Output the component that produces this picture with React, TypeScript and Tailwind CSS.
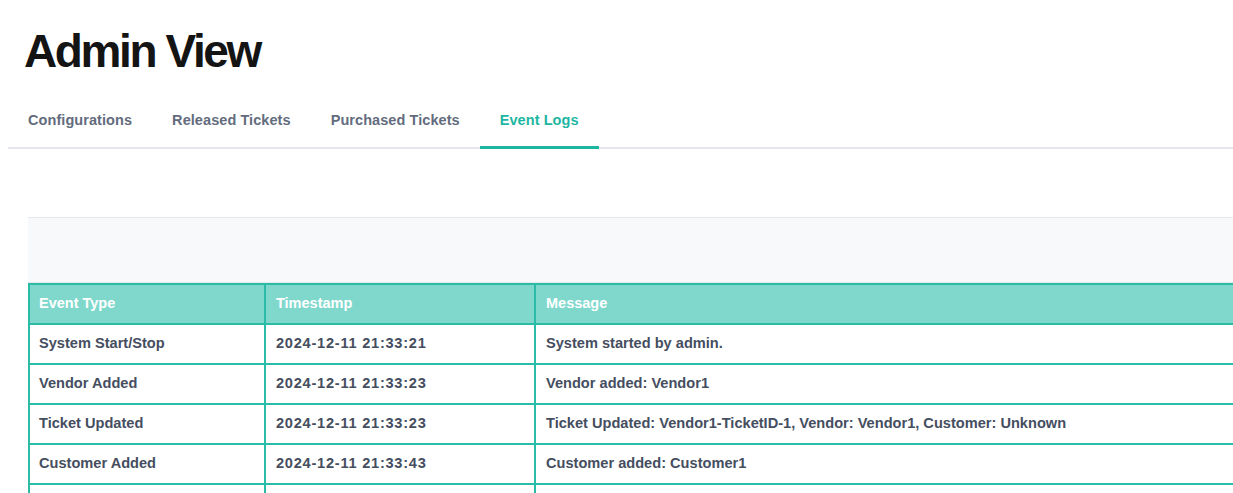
import React from "react";

const tabs = ["Configurations", "Released Tickets", "Purchased Tickets", "Event Logs"];

const logs = [
  {type: "System Start/Stop", time: "2024-12-11 21:33:21", message: "System started by admin."},
  {type: "Vendor Added", time: "2024-12-11 21:33:23", message: "Vendor added: Vendor1"},
  {
    type: "Ticket Updated",
    time: "2024-12-11 21:33:23",
    message: "Ticket Updated: Vendor1-TicketID-1, Vendor: Vendor1, Customer: Unknown",
  },
  {type: "Customer Added", time: "2024-12-11 21:33:43", message: "Customer added: Customer1"},
  {type: "Ticket Purchased", time: "2024-12-11 21:33:45", message: "Customer1 purchased Vendor1-TicketID-1"},
];

export default function App() {
  const active = "Event Logs";

  return (
    <div className="h-screen w-screen overflow-hidden bg-white font-['Liberation_Sans',Arial,sans-serif]">
      <div className="pl-2">
        {/* Page title */}
        <h1 className="pl-4 pt-[28px] text-[46px] font-bold leading-none tracking-[-2.4px] text-[#141414]">
          Admin View
        </h1>

        {/* Tabs */}
        <nav className="mt-[20px] flex border-b-2 border-[#e5e7eb]">
          {tabs.map((tab) => (
            <button
              key={tab}
              className={`-mb-[2px] border-b-[3px] px-5 pt-[16px] pb-[16px] text-[14.5px] font-bold leading-5 tracking-[0.07px] ${
                tab === active
                  ? "border-[#1db6a2] text-[#1db6a2]"
                  : "border-transparent text-[#636c7d]"
              }`}
            >
              {tab}
            </button>
          ))}
        </nav>

        {/* Log panel */}
        <div className="mt-[68px] pl-5">
          <div className="h-[66px] w-[1260px] border-t border-b border-[#e5e7eb] bg-[#f8f9fa]" />
          <table className="w-[1300px] table-fixed border-collapse text-left font-bold">
            <thead>
              <tr className="h-10 bg-[#80d8cd] text-[14.5px] text-white">
                <th className="w-[236px] border-2 border-[#2bbca8] px-[9px]">Event Type</th>
                <th className="w-[270px] border-2 border-[#2bbca8] px-[10px]">Timestamp</th>
                <th className="border-2 border-[#2bbca8] px-[10px]">Message</th>
              </tr>
            </thead>
            <tbody className="text-[14.6px] text-[#454e60]">
              {logs.map((log, i) => (
                <tr key={i} className="h-10">
                  <td className="border-2 border-[#2bbca8] px-[9px]">{log.type}</td>
                  <td className="border-2 border-[#2bbca8] px-[10px] tracking-[0.75px]">{log.time}</td>
                  <td className="border-2 border-[#2bbca8] px-[10px]">{log.message}</td>
                </tr>
              ))}
            </tbody>
          </table>
        </div>
      </div>
    </div>
  );
}
